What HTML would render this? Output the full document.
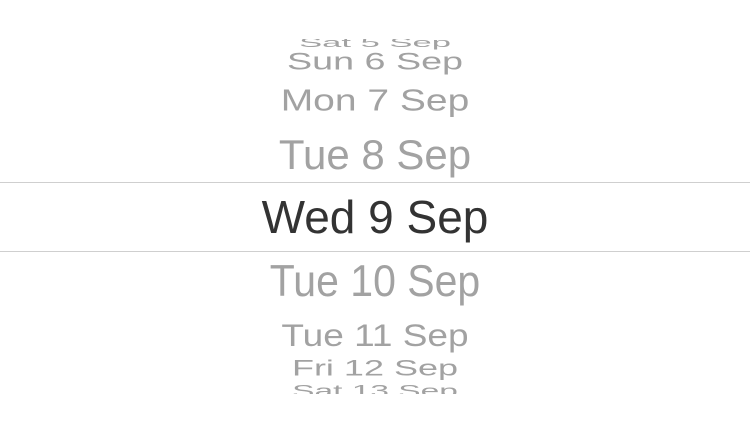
<!DOCTYPE html>
<html><head><meta charset="utf-8"><style>
html,body{margin:0;padding:0;background:#fff;width:750px;height:434px;overflow:hidden}
.clip{position:absolute;left:0;top:39px;width:750px;height:355px;overflow:hidden}
.r{position:absolute;left:0;width:750px;text-align:center;font-family:"Liberation Sans",sans-serif;line-height:1;color:#a2a2a2;white-space:nowrap;transform-origin:center 0.488em}
.line{position:absolute;left:0;width:750px;height:1px;background:#cfcfcf}
</style></head><body>
<div class="clip">
<div class="r" style="top:-13px;font-size:34.6px;transform:scaleY(0.38)">Sat 5 Sep</div>
<div class="r" style="top:4.1px;font-size:37.7px;transform:scaleY(0.63)">Sun 6 Sep</div>
<div class="r" style="top:42px;font-size:39px;transform:scaleY(0.79)">Mon 7 Sep</div>
<div class="r" style="top:95px;font-size:42px">Tue 8 Sep</div>
<div class="r" style="top:154.6px;font-size:46px;color:#333">Wed 9 Sep</div>
<div class="r" style="top:222px;font-size:41px;transform:scaleY(1.08)">Tue 10 Sep</div>
<div class="r" style="top:277.5px;font-size:37px;transform:scaleY(0.85)">Tue 11 Sep</div>
<div class="r" style="top:311.4px;font-size:36px;transform:scaleY(0.62)">Fri 12 Sep</div>
<div class="r" style="top:335.7px;font-size:33.5px;transform:scaleY(0.5)">Sat 13 Sep</div>
</div>
<div class="line" style="top:182px"></div>
<div class="line" style="top:251px"></div>
</body></html>
